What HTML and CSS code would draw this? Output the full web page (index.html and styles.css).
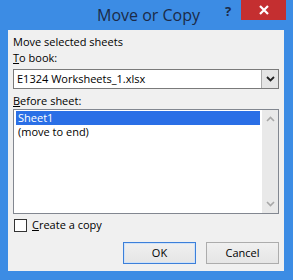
FILE: index.html
```html
<!DOCTYPE html>
<html>
<head>
<meta charset="utf-8">
<link rel="stylesheet" href="styles.css">
</head>
<body>
<div class="window">
  <div class="titlebar">
    <div class="title">Move or Copy</div>
    <div class="help">?</div>
    <div class="close">
      <svg width="10" height="10" viewBox="0 0 10 10"><path d="M1 1 L9 9 M9 1 L1 9" stroke="#fff" stroke-width="2.2" fill="none"/></svg>
    </div>
  </div>
  <div class="client">
    <div class="label">Move selected sheets</div>
    <div class="label"><u>T</u>o book:</div>
    <div class="combo">
      <div class="combo-text">E1324 Worksheets_1.xlsx</div>
      <div class="combo-btn">
        <svg width="9" height="6" viewBox="0 0 9 6"><path d="M1 1 L4.5 4.5 L8 1" stroke="#222" stroke-width="1.8" fill="none"/></svg>
      </div>
    </div>
    <div class="label label-before"><u>B</u>efore sheet:</div>
    <div class="list">
      <div class="items">
        <div class="item selected">Sheet1</div>
        <div class="item">(move to end)</div>
      </div>
      <div class="scrollbar">
        <svg width="9" height="6" viewBox="0 0 9 6"><path d="M1 5 L4.5 1.5 L8 5" stroke="#a8a8a8" stroke-width="1.6" fill="none"/></svg>
        <svg width="9" height="6" viewBox="0 0 9 6"><path d="M1 1 L4.5 4.5 L8 1" stroke="#a8a8a8" stroke-width="1.6" fill="none"/></svg>
      </div>
    </div>
    <div class="check-row">
      <div class="checkbox"></div>
      <div class="check-label"><u>C</u>reate a copy</div>
    </div>
    <div class="buttons">
      <div class="btn btn-default">OK</div>
      <div class="btn">Cancel</div>
    </div>
  </div>
</div>
</body>
</html>
```
FILE: styles.css
```css
html, body {
  margin: 0;
  padding: 0;
}
body {
  width: 293px;
  height: 280px;
  overflow: hidden;
  font-family: "Open Sans", "Noto Sans", sans-serif;
  font-size: 11px;
  color: #000;
}
.window {
  width: 293px;
  height: 280px;
  box-sizing: border-box;
  background: #3c8ce4;
  display: flex;
  flex-direction: column;
}
.titlebar {
  height: 30px;
  position: relative;
  flex: none;
}
.title {
  text-align: center;
  font-size: 16px;
  line-height: 30px;
  color: #1b2a47;
  padding-left: 4px;
}
.help {
  position: absolute;
  left: 225px;
  top: 3px;
  font-family: "Open Sans", sans-serif;
  font-weight: bold;
  font-size: 13px;
  line-height: 16px;
  color: #1b2a47;
}
.close {
  position: absolute;
  left: 241px;
  top: 0;
  width: 45px;
  height: 20px;
  background: #c42f30;
  display: flex;
  align-items: center;
  justify-content: center;
}
.client {
  flex: 1;
  margin: 0 9px 9px 8px;
  background: #f0f0f0;
  padding: 4px 5px 0 5px;
  display: flex;
  flex-direction: column;
}
.label {
  line-height: 16px;
  height: 16px;
}
.combo {
  margin-top: 3px;
  height: 20px;
  box-sizing: border-box;
  border: 1px solid #7a7a7a;
  background: #fff;
  display: flex;
}
.combo-text {
  flex: 1;
  line-height: 18px;
  padding-left: 3px;
}
.combo-btn {
  width: 16px;
  border-left: 1px solid #acacac;
  background: #e5e5e5;
  display: flex;
  align-items: center;
  justify-content: center;
}
.label-before {
  margin-top: 4px;
}
.list {
  margin-top: 0;
  height: 105px;
  box-sizing: border-box;
  border: 1px solid #828790;
  background: #fff;
  display: flex;
}
.items {
  flex: 1;
  padding: 1px 2px 0 2px;
}
.item {
  height: 14px;
  line-height: 14px;
  padding-left: 2px;
}
.item.selected {
  background: #2a6fe6;
  color: #fff;
}
.scrollbar {
  width: 16px;
  background: #e9e9e9;
  display: flex;
  flex-direction: column;
  justify-content: space-between;
  align-items: center;
  padding: 6px 0 6px;
}
.check-row {
  margin-top: 4px;
  display: flex;
  align-items: center;
  gap: 5px;
  padding-left: 1px;
}
.checkbox {
  width: 13px;
  height: 13px;
  box-sizing: border-box;
  border: 1px solid #333;
  background: #fff;
}
.check-label {
  line-height: 14px;
}
.buttons {
  margin-top: 10px;
  display: flex;
  justify-content: flex-end;
  gap: 10px;
}
.btn {
  width: 73px;
  height: 22px;
  box-sizing: border-box;
  border: 1px solid #acacac;
  background: linear-gradient(#f0f0f0, #e5e5e5);
  text-align: center;
  line-height: 20px;
}
.btn-default {
  border: 1px solid #3c7fd9;
  box-shadow: inset 0 0 0 1px #cfe2f8;
}
```
